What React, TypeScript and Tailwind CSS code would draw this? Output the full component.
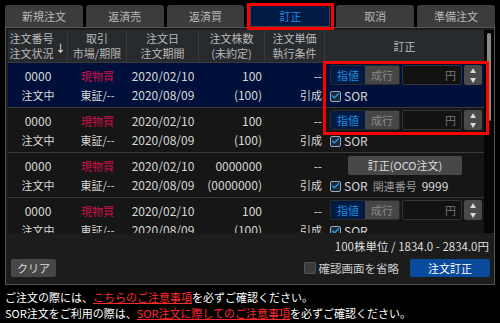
import { Check } from 'lucide-react'

const tabs = ['新規注文', '返済売', '返済買', '訂正', '取消', '準備注文']

const jp = { fontFamily: '"Noto Sans CJK JP", "Noto Sans", sans-serif' }

function PriceInput() {
  return (
    <div className="flex items-center h-[20px] gap-[2px]">
      <div className="flex h-full rounded-[2px] overflow-hidden border border-[#2a2a2a]">
        <div className="w-[34px] bg-[#001a44] text-[#1d8ee0] text-[11px] flex items-center justify-center">指値</div>
        <div className="w-[34px] bg-[#454545] text-[#8a8a8a] text-[11px] flex items-center justify-center">成行</div>
      </div>
      <div className="w-[60px] h-full bg-[#121212] border border-[#333] rounded-[2px] text-[11px] text-[#777] flex items-center justify-end pr-[5px]">円</div>
      <div className="w-[18px] h-full bg-[#4a4a4a] rounded-[2px] flex flex-col items-center justify-center text-[#ddd] text-[6px] leading-[9px]">
        <span>▲</span>
        <span>▼</span>
      </div>
    </div>
  )
}

function Checkbox({ checked }: { checked: boolean }) {
  return (
    <span className={`w-[11px] h-[11px] rounded-[2px] border flex items-center justify-center ${checked ? 'border-[#9ab] bg-[#1b2b3b]' : 'border-[#555] bg-[#333]'}`}>
      {checked && <Check size={10} strokeWidth={3.5} className="text-[#2a9ee8]" />}
    </span>
  )
}

type Row = { qty: string; qty2: string; selected?: boolean; oco?: boolean }

const rows: Row[] = [
  { qty: '100', qty2: '(100)', selected: true },
  { qty: '100', qty2: '(100)' },
  { qty: '0000000', qty2: '(0000000)', oco: true },
  { qty: '100', qty2: '(100)' },
]

function OrderRow({ r }: { r: Row }) {
  return (
    <div className={`grid grid-cols-[60px_59px_72px_66px_60px_1fr] h-[45px] border-b border-[#3a3a3a] ${r.selected ? 'bg-[#00103a]' : 'bg-[#161616]'}`}>
      <div className="flex flex-col items-center justify-center gap-[3px]">
        <span className="text-[12px] leading-[16px]">0000</span>
        <span className="text-[11px] leading-[16px]">注文中</span>
      </div>
      <div className="flex flex-col items-center justify-center gap-[3px]">
        <span className="text-[11px] leading-[16px] text-[#d0104a]">現物買</span>
        <span className="text-[11px] leading-[16px]">東証/--</span>
      </div>
      <div className="flex flex-col items-center justify-center gap-[3px] text-[12px]">
        <span className="leading-[16px]">2020/02/10</span>
        <span className="leading-[16px]">2020/08/09</span>
      </div>
      <div className="flex flex-col items-end justify-center gap-[3px] pr-[3px] text-[12px]">
        <span className="leading-[16px]">{r.qty}</span>
        <span className="leading-[16px]">{r.qty2}</span>
      </div>
      <div className="flex flex-col items-end justify-center gap-[3px] pr-[3px]">
        <span className="text-[12px] leading-[16px]">--</span>
        <span className="text-[11px] leading-[16px]">引成</span>
      </div>
      <div className="flex flex-col justify-center gap-[2px] pl-[5px]">
        {r.oco ? (
          <div className="h-[20px] flex items-center">
            <div className="ml-[18px] w-[114px] h-[19px] bg-[#474747] rounded-[2px] text-[11px] text-[#ddd] flex items-center justify-center">訂正(OCO注文)</div>
          </div>
        ) : (
          <PriceInput />
        )}
        <div className="flex items-center gap-[3px] h-[18px] text-[12px]">
          <Checkbox checked />
          <span>SOR</span>
          {r.oco && <span className="text-[11px] text-[#999] ml-[2px]">関連番号</span>}
          {r.oco && <span className="ml-[2px]">9999</span>}
        </div>
      </div>
    </div>
  )
}

export default function App() {
  return (
    <div className="w-[500px] h-[323px] bg-black text-[#d8d8d8] relative overflow-hidden" style={jp}>
      <div className="flex gap-[3px] px-[5px] pt-[5px] h-[27px]">
        {tabs.map((t) => (
          <div
            key={t}
            className={`flex-1 rounded-t-[3px] flex items-center justify-center text-[11px] ${
              t === '訂正' ? 'bg-[#001a44] text-[#1d8ee0] border border-[#444] mx-[3px]' : 'bg-[#3c3c3c] text-[#b8b8b8]'
            }`}
          >
            {t}
          </div>
        ))}
      </div>

      <div className="mx-[5px] h-[258px] border border-[#555] bg-[#1c1c1c] flex flex-col">
        <div className="flex h-[205px] pl-[2px] pt-[2px]">
          <div className="flex-1 overflow-hidden">
            <div className="grid grid-cols-[60px_59px_72px_66px_60px_1fr] h-[33px] bg-[#282b2e] border-b border-[#3a3a3a] text-[11px] text-[#b8b8b8] leading-[15px]">
              <div className="flex items-center justify-center gap-[2px] border-r border-[#3a3a3a]">
                <div className="flex flex-col items-center">
                  <span>注文番号</span>
                  <span>注文状況</span>
                </div>
                <span className="text-[10px] text-white mt-[2px]">↓</span>
              </div>
              <div className="flex flex-col items-center justify-center border-r border-[#3a3a3a]">
                <span>取引</span>
                <span>市場/期限</span>
              </div>
              <div className="flex flex-col items-center justify-center border-r border-[#3a3a3a]">
                <span>注文日</span>
                <span>注文期間</span>
              </div>
              <div className="flex flex-col items-center justify-center border-r border-[#3a3a3a]">
                <span>注文株数</span>
                <span>(未約定)</span>
              </div>
              <div className="flex flex-col items-center justify-center border-r border-[#3a3a3a]">
                <span>注文単価</span>
                <span>執行条件</span>
              </div>
              <div className="flex items-center justify-center">訂正</div>
            </div>
            {rows.map((r, i) => (
              <OrderRow key={i} r={r} />
            ))}
          </div>
          <div className="w-[10px] bg-[#050505] pt-[3px] flex justify-center">
            <div className="w-[4px] h-[88px] bg-[#8a8a8a] rounded-[2px]" />
          </div>
        </div>

        <div className="flex-1 flex flex-col px-[4px] pt-[5px]">
          <div className="text-right text-[11.5px] text-[#ddd] pr-[1px]">100株単位 / 1834.0 - 2834.0円</div>
          <div className="flex items-center mt-[4px]">
            <div className="w-[45px] h-[18px] bg-[#474747] rounded-[2px] text-[11px] text-[#ddd] flex items-center justify-center ml-[1px]">クリア</div>
            <div className="flex-1" />
            <span className="w-[12px] h-[12px] bg-[#3a3a3a] border border-[#555] rounded-[2px] mr-[3px]" />
            <span className="text-[11.5px] text-[#ccc]">確認画面を省略</span>
            <div className="ml-[11px] w-[80px] h-[18px] bg-[#0a4a9c] rounded-[2px] text-[11px] text-white flex items-center justify-center">注文訂正</div>
          </div>
        </div>
      </div>

      <div className="px-[5px] pt-[4px] text-[11px] leading-[16px] text-white">
        <div>
          ご注文の際には、<span className="text-[#ff2a2a] underline">こちらのご注意事項</span>を必ずご確認ください。
        </div>
        <div>
          SOR注文をご利用の際は、<span className="text-[#ff2a2a] underline">SOR注文に際してのご注意事項</span>を必ずご確認ください。
        </div>
      </div>

      <div className="absolute left-[247px] top-[3px] w-[87px] h-[27px] border-[3px] border-[#ff0000]" />
      <div className="absolute left-[323px] top-[61px] w-[166px] h-[74px] border-[3px] border-[#ff0000]" />
    </div>
  )
}
